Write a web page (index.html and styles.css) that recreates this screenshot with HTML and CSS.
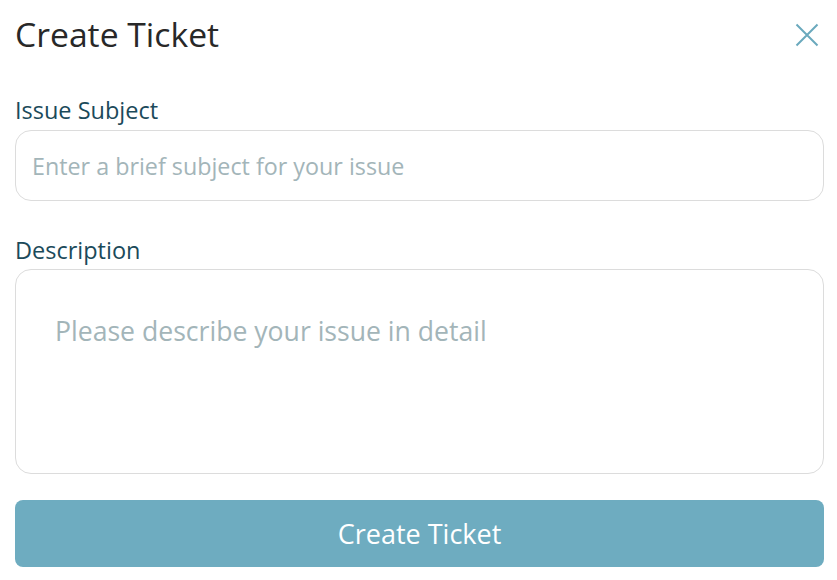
FILE: index.html
```html
<!DOCTYPE html>
<html>
<head>
<meta charset="utf-8">
<link rel="stylesheet" href="styles.css">
</head>
<body>
<div class="modal">
  <div class="header">
    <h1 class="title">Create Ticket</h1>
    <button class="close" aria-label="Close">
      <svg width="24" height="24" viewBox="0 0 24 24"><path d="M1.5 1.5L22.5 22.5M22.5 1.5L1.5 22.5" stroke="#6aa9bd" stroke-width="2" fill="none"/></svg>
    </button>
  </div>
  <div class="field first">
    <label class="label">Issue Subject</label>
    <input class="input" type="text" placeholder="Enter a brief subject for your issue">
  </div>
  <div class="field second">
    <label class="label">Description</label>
    <textarea class="textarea" placeholder="Please describe your issue in detail"></textarea>
  </div>
  <button class="submit">Create Ticket</button>
</div>
</body>
</html>
```
FILE: styles.css
```css
html, body { margin: 0; padding: 0; background: #fff; }
body { font-family: "Open Sans", "Noto Sans", sans-serif; }
.modal { width: 809px; padding: 12px 13px 0 15px; display: flex; flex-direction: column; }
.header { display: flex; justify-content: space-between; align-items: center; }
.title { margin: 0; font-size: 33.7px; line-height: 45px; font-weight: 500; color: #282828; }
.close { background: none; border: 0; padding: 0; margin-right: 5px; margin-top: 0; width: 24px; height: 24px; display: flex; }
.field { display: flex; flex-direction: column; }
.label { font-size: 23.5px; color: #1b4a5a; line-height: 32px; margin-bottom: 4px; }
.first { margin-top: 37px; }
.second { margin-top: 33px; }
.second .label { margin-bottom: 3px; }
.input { box-sizing: border-box; height: 71px; border: 1px solid #dcdcdc; border-radius: 16px; padding: 0 16px; font-family: inherit; font-size: 23.3px; outline: none; }
.input::placeholder { color: #a3b5b9; }
.textarea { box-sizing: border-box; height: 205px; border: 1px solid #dcdcdc; border-radius: 16px; padding: 43px 39px; font-family: inherit; font-size: 26.6px; resize: none; outline: none; }
.textarea::placeholder { color: #a3b5b9; }
.submit { margin-top: 26px; height: 67px; border: 0; border-radius: 8px; background: #6eacc0; color: #fff; font-family: inherit; font-size: 27px; font-weight: 500; }
```
